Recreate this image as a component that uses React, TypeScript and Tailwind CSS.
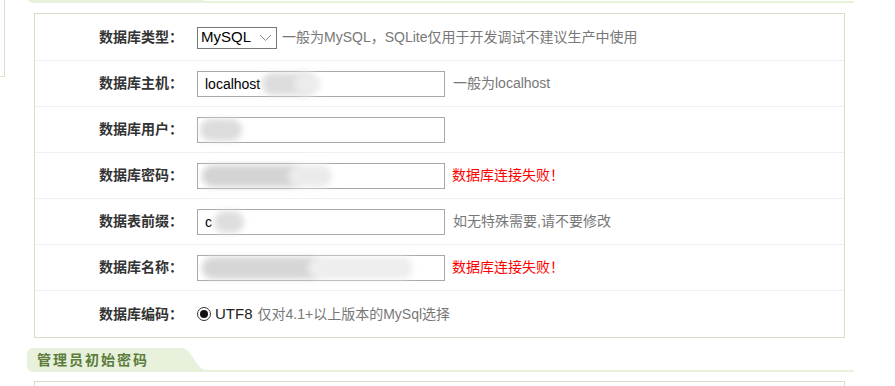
import { ReactNode } from "react";

const FONT = { fontFamily: '"Liberation Sans", "Noto Sans CJK SC", sans-serif' };

// blurred patch over a masked value
function Smudge({ left, width, tone = "#d9d9d9" }: { left: number; width: number; tone?: string }) {
  return (
    <span
      className="absolute top-[1px] bottom-[1px] rounded-full blur-[3px]"
      style={{ left, width, backgroundColor: tone }}
    />
  );
}

function TextBox({ value, children }: { value?: string; children?: ReactNode }) {
  return (
    <div className="relative w-[248px] h-[26px] border border-[#a9a9a9] bg-white overflow-visible">
      {value && <span className="absolute left-[7px] top-[4px] text-[14px] text-black leading-[16px]">{value}</span>}
      {children}
    </div>
  );
}

function Row({ label, children, last = false }: { label: string; children: ReactNode; last?: boolean }) {
  return (
    <div className={"flex items-center h-[46px] " + (last ? "" : "border-b border-[#efefef]")}>
      <div className="w-[148px] text-right text-[14px] font-bold text-[#333]">{label}</div>
      <div className="pl-[14px] flex items-center">{children}</div>
    </div>
  );
}

function SectionHead({ title }: { title?: string }) {
  return (
    <div className="flex items-end h-[24px]">
      <div className="h-[24px] w-[150px] bg-[#e8f1dc] rounded-l-[6px] pl-[10px] flex items-center text-[14px] font-bold tracking-[2px] text-[#5c7c3c]">
        {title}
      </div>
      <svg width="30" height="24" viewBox="0 0 30 24" className="block">
        <path d="M0 0 L4 0 C16 0 18 22 30 22 L30 24 L0 24 Z" fill="#e8f1dc" />
      </svg>
      <div className="flex-1 h-[2px] bg-[#e8f1dc]" />
    </div>
  );
}

export default function App() {
  return (
    <div className="w-[895px] h-[386px] overflow-hidden bg-white" style={FONT}>
      <div className="flex -mt-[21px]">
        <div className="w-[5px] h-[98px] border-r border-b border-[#d6e2c9] shrink-0" />
        <div className="ml-[22px] w-[827px]">
          {/* previous section header, scrolled almost out of view */}
          <SectionHead />

          <div className="mt-[10px] mx-[7px] w-[811px] border border-[#d3dfc6] pt-[1px]">
            <Row label="数据库类型：">
              <div className="flex items-center w-[80px] h-[22px] border border-[#767676] bg-white pl-[3px]">
                <span className="text-[15px] text-black">MySQL</span>
                <svg width="13" height="8" viewBox="0 0 13 8" className="ml-[8px]">
                  <path d="M1 1 L6.5 6.5 L12 1" fill="none" stroke="#8a8a8a" strokeWidth="1" />
                </svg>
              </div>
              <span className="ml-[5px] text-[14px] text-[#777]">一般为MySQL，SQLite仅用于开发调试不建议生产中使用</span>
            </Row>

            <Row label="数据库主机：">
              <TextBox value="localhost">
                <Smudge left={64} width={52} tone="#dcdcdc" />
                <Smudge left={96} width={26} tone="#ececec" />
              </TextBox>
              <span className="ml-[8px] text-[14px] text-[#777]">一般为localhost</span>
            </Row>

            <Row label="数据库用户：">
              <TextBox>
                <Smudge left={2} width={42} tone="#dcdcdc" />
              </TextBox>
            </Row>

            <Row label="数据库密码：">
              <TextBox>
                <Smudge left={4} width={100} tone="#d4d4d4" />
                <Smudge left={90} width={44} tone="#ebebeb" />
              </TextBox>
              <span className="ml-[7px] text-[14px] text-[#ff0000]">数据库连接失败！</span>
            </Row>

            <Row label="数据表前缀：">
              <TextBox value="c">
                <Smudge left={16} width={30} tone="#dedede" />
              </TextBox>
              <span className="ml-[8px] text-[14px] text-[#777]">如无特殊需要,请不要修改</span>
            </Row>

            <Row label="数据库名称：">
              <TextBox>
                <Smudge left={4} width={120} tone="#d6d6d6" />
                <Smudge left={110} width={105} tone="#eeeeee" />
              </TextBox>
              <span className="ml-[7px] text-[14px] text-[#ff0000]">数据库连接失败！</span>
            </Row>

            <Row label="数据库编码：" last>
              <div className="flex items-center">
                <span className="w-[14px] h-[14px] rounded-full border border-[#333] bg-white flex items-center justify-center">
                  <span className="w-[8px] h-[8px] rounded-full bg-[#111]" />
                </span>
                <span className="ml-[4px] text-[15px] text-[#222]">UTF8</span>
                <span className="ml-[5px] text-[14px] text-[#777]">仅对4.1+以上版本的MySql选择</span>
              </div>
            </Row>
          </div>

          <div className="mt-[10px]">
            <SectionHead title="管理员初始密码" />
          </div>
          <div className="mt-[9px] mx-[7px] w-[811px] h-[40px] border border-[#d3dfc6]" />
        </div>
      </div>
    </div>
  );
}
